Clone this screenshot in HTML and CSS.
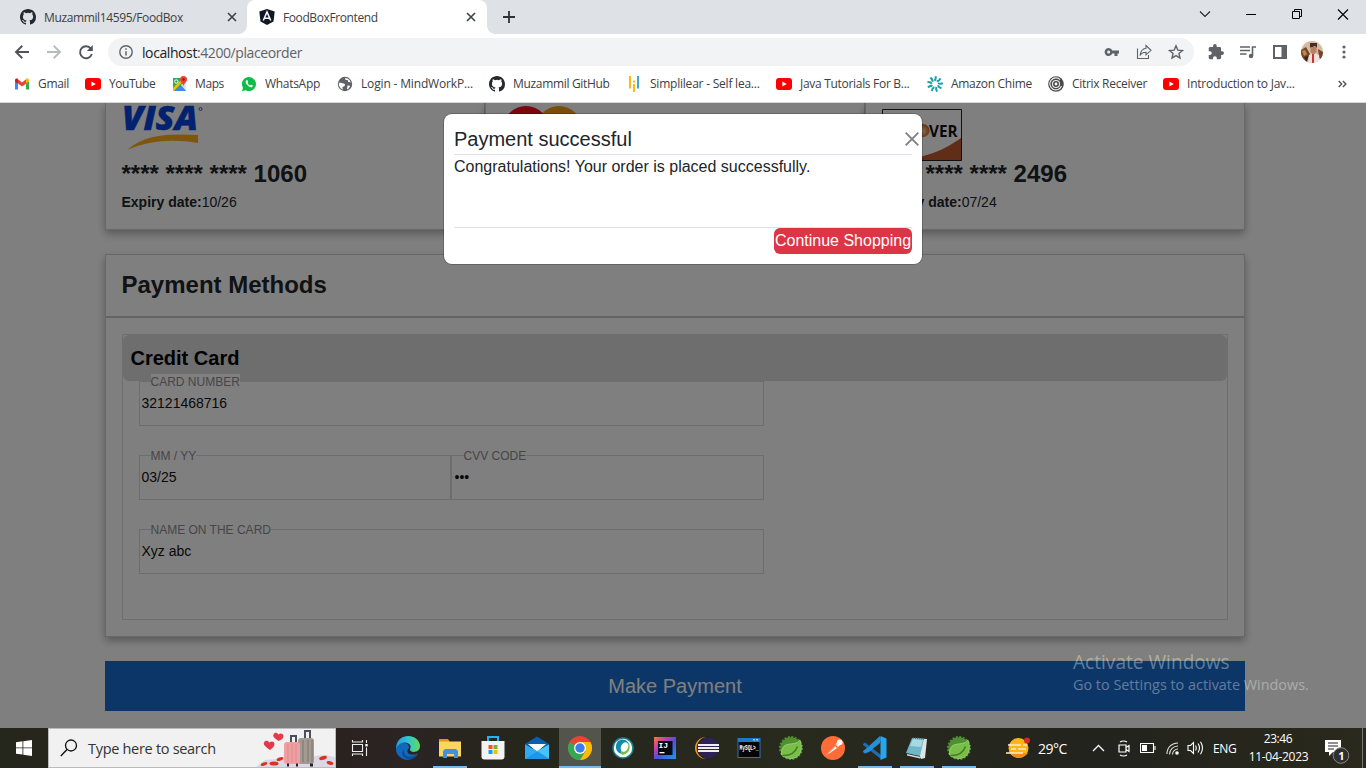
FILE: index.html
```html
<!DOCTYPE html>
<html lang="en">
<head>
<meta charset="utf-8">
<title>FoodBoxFrontend</title>
<link rel="stylesheet" href="styles.css">
</head>
<body>
<svg class="defs" aria-hidden="true">
  <symbol id="github" viewBox="0 0 16 16"><path fill="#24292f" d="M8 0C3.58 0 0 3.58 0 8c0 3.54 2.29 6.53 5.47 7.59.4.07.55-.17.55-.38 0-.19-.01-.82-.01-1.49-2.01.37-2.53-.49-2.69-.94-.09-.23-.48-.94-.82-1.13-.28-.15-.68-.52-.01-.53.63-.01 1.08.58 1.23.82.72 1.21 1.87.87 2.33.66.07-.52.28-.87.51-1.07-1.78-.2-3.64-.89-3.64-3.95 0-.87.31-1.59.82-2.15-.08-.2-.36-1.02.08-2.12 0 0 .67-.21 2.2.82a7.6 7.6 0 0 1 4 0c1.53-1.04 2.2-.82 2.2-.82.44 1.1.16 1.92.08 2.12.51.56.82 1.27.82 2.15 0 3.07-1.87 3.75-3.65 3.95.29.25.54.73.54 1.48 0 1.07-.01 1.93-.01 2.2 0 .21.15.46.55.38A8 8 0 0 0 16 8c0-4.42-3.58-8-8-8z"/></symbol>
  <symbol id="youtube" viewBox="0 0 16 16"><rect y="2" width="16" height="12" rx="3" fill="#f00"/><path fill="#fff" d="M6.400 5.500v5L10.800 8z"/></symbol>
  <symbol id="spring" viewBox="0 0 26 26"><circle cx="13" cy="13" r="10.700" fill="#4f9130"/><circle cx="13" cy="13" r="11" fill="none" stroke="#4f9130" stroke-width="2" stroke-dasharray="2 1.450"/><path fill="#78be47" stroke="#b9dca0" stroke-width=".6" d="M22 5c3 8 1 16-5.500 18C12 24.300 7 23 3.500 20 3 14 5 10.500 10 9.300 15 8.300 19 9 22 5z"/><path d="M4.500 20.500c6 .2 12.500-2 15-9" fill="none" stroke="#427f28" stroke-width="1.500"/></symbol>
  <symbol id="cross" viewBox="0 0 10 10"><path d="M1 1l8 8M9 1l-8 8" stroke="#3c4043" stroke-width="1.600"/></symbol>
</svg>

<header class="tabs">
  <div class="tab tab-idle"><svg width="16" height="16"><use href="#github"/></svg><span class="tab-title t-a">Muzammil14595/FoodBox</span><svg class="tab-x" width="10" height="10"><use href="#cross"/></svg></div>
  <div class="tab tab-active"><svg width="16" height="16" viewBox="0 0 16 16"><path fill="#111827" d="M8 0l7.700 2.600L14.500 12.500 8 16 1.500 12.500.3 2.600z"/><path d="M4.300 11.500L8 3l3.700 8.500M5.600 9.200h4.800" fill="none" stroke="#fff" stroke-width="1.500"/></svg><span class="tab-title t-b">FoodBoxFrontend</span><svg class="tab-x" width="10" height="10"><use href="#cross"/></svg></div>
  <svg class="new-tab" width="12" height="12" viewBox="0 0 12 12"><path d="M6 0v12M0 6h12" stroke="#303134" stroke-width="1.800"/></svg>
  <div class="win">
    <svg width="46" height="30" viewBox="0 0 46 30"><path d="M18 11.500l5 5 5-5" fill="none" stroke="#222" stroke-width="1.100"/></svg>
    <svg width="46" height="30" viewBox="0 0 46 30"><path d="M18 14.500h10" stroke="#000"/></svg>
    <svg width="46" height="30" viewBox="0 0 46 30"><path d="M18.500 11.500h7v7h-7zM20.500 11.500v-2h7v7h-2" fill="none" stroke="#000"/></svg>
    <svg width="46" height="30" viewBox="0 0 46 30"><path d="M18 9.500l10 10M28 9.500l-10 10" stroke="#000" stroke-width="1.100"/></svg>
  </div>
</header>

<div class="toolbar">
  <svg width="32" height="36" viewBox="0 0 32 36"><path d="M29 18H16.500M22.300 11.800L16 18l6.300 6.200" fill="none" stroke="#50545a" stroke-width="1.900"/></svg>
  <svg width="32" height="36" viewBox="0 0 32 36"><path d="M15 18h12.500M21.700 11.800L28 18l-6.300 6.200" fill="none" stroke="#b9bbbe" stroke-width="1.900"/></svg>
  <svg width="32" height="36" viewBox="0 0 32 36"><path d="M26.800 14.600A6 6 0 1 0 27.800 20" fill="none" stroke="#50545a" stroke-width="1.900"/><path d="M28.800 11v6h-6z" fill="#50545a"/></svg>
  <div class="omnibox">
    <svg width="14" height="14" viewBox="0 0 14 14"><circle cx="7" cy="7" r="6.200" fill="none" stroke="#5f6368" stroke-width="1.400"/><path d="M7 6.200v4.300M7 3.300v1.500" stroke="#5f6368" stroke-width="1.500"/></svg>
    <span class="url"><b>localhost</b>:4200/placeorder</span>
    <div class="omni-icons">
      <svg width="16" height="16" viewBox="0 0 16 16"><path fill="#5f6368" fill-rule="evenodd" d="M8.300 6.500A4 4 0 1 0 8.300 9.500H10.500V12h3V9.500H15v-3zM4.600 6.500a1.500 1.500 0 1 1 0 3 1.500 1.500 0 0 1 0-3z"/></svg>
      <svg width="16" height="16" viewBox="0 0 16 16"><path d="M1.500 4.500v10h11v-3.500M10 1.500l5 4.800-5 4.500V8.300C7 8.300 5.300 9 4 11.500 4.500 7 6.500 4.900 10 4.300z" fill="none" stroke="#5f6368" stroke-width="1.100"/></svg>
      <svg width="16" height="16" viewBox="0 0 16 16"><path d="M8 1.800l1.800 4.300 4.700.4-3.600 3 1.100 4.600L8 11.600 4 14.100l1.100-4.600-3.600-3 4.700-.4z" fill="none" stroke="#5f6368" stroke-width="1.400"/></svg>
    </div>
  </div>
  <div class="actions">
    <svg width="16" height="16" viewBox="1 1 22 22"><path fill="#5f6368" d="M20.500 11H19V7c0-1.100-.9-2-2-2h-4V3.500a2.500 2.500 0 0 0-5 0V5H4c-1.100 0-2 .9-2 2v3.800h1.500a2.700 2.700 0 0 1 0 5.400H2V20c0 1.100.9 2 2 2h3.800v-1.500a2.700 2.700 0 0 1 5.400 0V22H17c1.100 0 2-.9 2-2v-4h1.500a2.500 2.500 0 0 0 0-5z"/></svg>
    <svg width="16" height="16" viewBox="0 0 16 16"><path d="M0 3h10M0 6.500h10M0 10h6.500" stroke="#5f6368" stroke-width="1.500"/><path d="M12.500 12V3H16" fill="none" stroke="#5f6368" stroke-width="1.600"/><circle cx="11" cy="12" r="2.200" fill="#5f6368"/></svg>
    <svg width="14" height="14" viewBox="0 0 14 14"><path fill="#5f6368" fill-rule="evenodd" d="M0 0h14v14H0zM2 2v10h6.500V2z"/></svg>
    <svg width="22" height="22" viewBox="0 0 22 22"><clipPath id="face"><circle cx="11" cy="11" r="11"/></clipPath><g clip-path="url(#face)"><path fill="#d7b99f" d="M0 0h22v22H0z"/><path fill="#74482e" d="M0 9l5-3 4 7-4 9H0zM17 8l5 3v8l-4-2z"/><path fill="#c98a3c" d="M1 10l3-1 2 4-3 2z"/><path fill="#efe1df" d="M8 14l5-2 5 2 1 8H7z"/><path fill="#463025" d="M9 2h7v5l-2-2-5 2z"/><path fill="#b98163" d="M9.500 6h6v5l-3 3-3-3z"/><path fill="#c93333" d="M11 13h2v9h-2z"/><path fill="#332420" d="M3 16l4-1-1 6z"/></g></svg>
    <svg width="4" height="14" viewBox="0 0 4 14"><g fill="#5f6368"><circle cx="2" cy="2" r="1.600"/><circle cx="2" cy="7" r="1.600"/><circle cx="2" cy="12" r="1.600"/></g></svg>
  </div>
</div>

<nav class="bookmarks">
  <a><svg width="16" height="16" viewBox="0 0 16 16"><path fill="#4285f4" d="M1 4v9.500h3V7z"/><path fill="#34a853" d="M12 7v6.500h3V4z"/><path fill="#ea4335" d="M1 4.500L3 2.500l5 4 5-4V7L8 10.500 2 6z"/><path fill="#c5221f" d="M1 4.200C1 2.500 2.700 2 4 3v4.500L1 5.500z"/><path fill="#fbbc04" d="M15 4.200C15 2.500 13.300 2 12 3v4.500l3-2z"/></svg><span class="k1">Gmail</span></a>
  <a><svg width="16" height="16"><use href="#youtube"/></svg><span class="k2">YouTube</span></a>
  <a><svg width="16" height="16" viewBox="0 0 16 16"><path fill="#34a853" d="M1 2h13v13H1z"/><path fill="#fbbc04" d="M1 12L11 2l2 1L2 15H1z"/><path fill="#dfe3e8" d="M9 9l5-5v11z"/><path fill="#4285f4" d="M2.500 15L8 9.500l5.500 5.500z"/><circle cx="4.300" cy="5.500" r="1.700" fill="none" stroke="#fff"/><path fill="#ea4335" d="M11.500 0A3.500 3.500 0 0 1 15 3.500c0 2.500-3 3.500-3.500 7C11 7 8 6 8 3.500A3.500 3.500 0 0 1 11.500 0z"/><circle cx="11.500" cy="3.500" r="1.200" fill="#8d1b12"/></svg><span class="k3">Maps</span></a>
  <a><svg width="16" height="16" viewBox="0 0 16 16"><path fill="#0dbd47" d="M8 1a7 7 0 1 1-3.300 13.200L1 15.200l1-3.500A7 7 0 0 1 8 1z"/><path fill="#fff" d="M5.500 4.300c-1.300.8-1 2.500.3 4.200 1.700 2.200 4.300 3.600 5.600 2.300.7-.8.5-1.200-.1-1.500l-1.100-.6c-.5-.2-.7.8-1.200.7C8 9 7 8 6.700 7c-.1-.4.6-.6.5-1.100L6.500 4.400c-.2-.4-.6-.4-1-.1z"/></svg><span class="k4">WhatsApp</span></a>
  <a><svg width="16" height="16" viewBox="0 0 16 16"><circle cx="8" cy="8" r="7.200" fill="#5f6368"/><path d="M2 7c2-.5 3 .5 4.500.5s2 1.500 1 2.500-2 0-2 2l.5 1.500C3 12.500 1.500 9.500 2 7zM8 2.200c0 1.500 1 1.600 2.300 1.800s0 1.800 1.300 2 1.600 0 1.900 1.300c.3-3-2-5.500-5.500-5.100zM10.500 9.500c1.500.2 2.500 0 2.500.5-.5 2-1.500 3-3 3.500z" fill="#fff"/></svg><span class="k5">Login - MindWorkP...</span></a>
  <a><svg width="16" height="16"><use href="#github"/></svg><span class="k6">Muzammil GitHub</span></a>
  <a><svg width="16" height="16" viewBox="0 0 16 16"><path fill="#fdb913" d="M1 0h2v12.500H1zM5 8h2v8H5zM5 4.500h2v2H5z"/><path fill="#3ea6dd" d="M9 0h2v12.500H9z"/></svg><span class="k7">Simplilear - Self lea...</span></a>
  <a><svg width="16" height="16"><use href="#youtube"/></svg><span class="k8">Java Tutorials For B...</span></a>
  <a><svg width="16" height="16" viewBox="0 0 16 16"><g fill="none" stroke="#17a2a8" stroke-width="2"><path id="ray" d="M7.500 4.800Q9.300 3 8.500.2"/><use href="#ray" transform="rotate(40 8 8)"/><use href="#ray" transform="rotate(80 8 8)"/><use href="#ray" transform="rotate(120 8 8)"/><use href="#ray" transform="rotate(160 8 8)"/><use href="#ray" transform="rotate(200 8 8)"/><use href="#ray" transform="rotate(240 8 8)"/><use href="#ray" transform="rotate(280 8 8)"/><use href="#ray" transform="rotate(320 8 8)"/></g></svg><span class="k9">Amazon Chime</span></a>
  <a><svg width="16" height="16" viewBox="0 0 16 16"><circle cx="8" cy="8" r="7.800" fill="#4a4a4a"/><g fill="none" stroke="#eee" stroke-width="1.100"><path d="M13.500 10A6 6 0 1 1 12 3.500"/><circle cx="8" cy="8" r="3.500"/></g><circle cx="8" cy="8" r="1.400" fill="#fff"/></svg><span class="k10">Citrix Receiver</span></a>
  <a><svg width="16" height="16"><use href="#youtube"/></svg><span class="k11">Introduction to Jav...</span></a>
  <a><svg width="9" height="8" viewBox="0 0 9 8"><path d="M.7 1l3 3-3 3M4.900 1l3 3-3 3" fill="none" stroke="#50545a" stroke-width="1.400"/></svg></a>
</nav>

<main class="viewport">
  <div class="page">
    <section class="saved">
      <article class="card">
        <svg class="brand" width="82" height="50" viewBox="0 0 82 50"><text x="0" y="25" class="visa" textLength="76" lengthAdjust="spacingAndGlyphs">VISA</text><circle cx="78.500" cy="4" r="1.500" fill="none" stroke="#0442de" stroke-width=".8"/><path fill="#ffae18" d="M5 45C25 28 50 29 76 30v8C51 34 28 35 5 45z"/></svg>
        <h2>**** **** **** 1060</h2>
        <p><b>Expiry date:</b>10/26</p>
      </article>
      <article class="card">
        <svg class="brand" width="82" height="50" viewBox="0 0 82 50"><circle cx="57" cy="24" r="23" fill="#f59a14"/><circle cx="24" cy="24" r="23" fill="#f80c1a"/></svg>
      </article>
      <article class="card">
        <svg class="brand discover" width="80" height="52" viewBox="0 0 80 52"><defs><radialGradient id="globe" cx=".5" cy=".55"><stop offset="0" stop-color="#ffd8a8"/><stop offset="1" stop-color="#d96522"/></radialGradient></defs><path d="M.5.500h79v51H.5z" fill="#fff" stroke="#222"/><path fill="#c05a32" d="M15 51C45 49 62 41 79 29v22z"/><circle cx="41" cy="21.500" r="6.500" fill="url(#globe)"/><text x="47" y="27.500" class="disc" textLength="28.500" lengthAdjust="spacingAndGlyphs">VER</text></svg>
        <h2>**** **** **** 2496</h2>
        <p><b>Expiry date:</b>07/24</p>
      </article>
    </section>

    <section class="methods">
      <h2 class="methods-head">Payment Methods</h2>
      <div class="methods-body">
        <div class="credit">
          <h3>Credit Card</h3>
          <div class="form">
            <div class="field"><label>CARD NUMBER</label><span>32121468716</span></div>
            <div class="pair">
              <div class="field"><label>MM / YY</label><span>03/25</span></div>
              <div class="field cvv"><label>CVV CODE</label><span>•••</span></div>
            </div>
            <div class="field"><label>NAME ON THE CARD</label><span>Xyz abc</span></div>
          </div>
        </div>
      </div>
    </section>
    <button class="pay">Make Payment</button>
  </div>

  <div class="backdrop"></div>
  <div class="modal">
    <div class="modal-head">Payment successful<svg class="close" width="14" height="14" viewBox="0 0 14 14"><path d="M.7.700l12.600 12.600M13.300.700L.7 13.300" stroke="#808080" stroke-width="1.900"/></svg></div>
    <div class="modal-body">Congratulations! Your order is placed successfully.</div>
    <div class="modal-foot"><button>Continue Shopping</button></div>
  </div>
  <div class="watermark"><div class="w1">Activate Windows</div><div class="w2">Go to Settings to activate Windows.</div></div>
</main>

<footer class="taskbar">
  <div class="start"><svg width="16" height="16" viewBox="0 0 16 16"><path fill="#fff" d="M0 2.200l6.500-.9v6.200H0zM7.300 1.200L16 0v7.500H7.300zM0 8.300h6.500v6.300L0 13.700zM7.300 8.300H16V16l-8.700-1.200z"/></svg></div>
  <div class="search">
    <svg width="18" height="18" viewBox="0 0 18 18"><circle cx="11" cy="6.500" r="5.500" fill="none" stroke="#111" stroke-width="1.300"/><path d="M7 10.500L.8 17" stroke="#111" stroke-width="1.400"/></svg>
    <span>Type here to search</span>
    <svg class="luggage" width="79" height="38" viewBox="0 0 79 38"><path fill="#dcd7e4" d="M0 38l9-7 60-5 10 2v10z"/><g fill="#e5394b"><path d="M14 21c-4-3-7-5-6-7.500s4-2 5.500 0c2-2 5-1 5 1.500s-2 4-4.500 6z"/><path d="M22.500 12c-4-3-6-4-5-6.500s3.500-2 5 0c2-2 5-1 5 1.500s-2 3.500-5 5z"/></g><path d="M35 14V7h5v7M49 11V2h5v9" fill="none" stroke="#4b4d59" stroke-width="2"/><rect x="42" y="9" width="16" height="26" rx="3" fill="#a39a91"/><path d="M47 11v22M52 11v22M56 11v22" stroke="#7d756d"/><rect x="28" y="13" width="16" height="22" rx="3" fill="#ed9fa1"/><path d="M32 15v18M36 15v18M40 15v18" stroke="#dc8b8e"/><g fill="#d9321f"><ellipse cx="24" cy="30" rx="3.500" ry="1.700" transform="rotate(-20 24 30)"/><ellipse cx="18" cy="34.500" rx="4.500" ry="2"/><ellipse cx="8" cy="35" rx="3.500" ry="1.500" transform="rotate(-20 8 35)"/><ellipse cx="67" cy="29" rx="4" ry="1.800" transform="rotate(-15 67 29)"/><ellipse cx="74" cy="34" rx="3.500" ry="1.800" transform="rotate(15 74 34)"/></g><path d="M31 36h2M40 36h2M54 36h3" stroke="#222" stroke-width="3"/></svg>
  </div>
  <div class="taskview"><svg width="18" height="18" viewBox="0 0 18 18"><path d="M1.500 5.500h10v7h-10zM1.500 1v2h10V1M1.500 17v-2h10v2M15.500 1v3M15.500 8.500V17" fill="none" stroke="#eee" stroke-width="1.100"/><path fill="#fff" d="M14.300 5h2.400v2.400h-2.400z"/></svg></div>
  <div class="apps">
    <i><svg width="26" height="26" viewBox="0 0 26 26"><defs><linearGradient id="edge"><stop stop-color="#259be4"/><stop offset=".5" stop-color="#30c6d2"/><stop offset="1" stop-color="#67da54"/></linearGradient></defs><path fill="#1168bd" d="M1 14c0-8 14-8 13-1-4 4 0 9 9 5.500C19 25 10 27 5 22 2 20 1 17 1 14z"/><path fill="url(#edge)" d="M1 14C1 4 8 1 13 1c8 0 12 6 12 10 0 7-9 7-10 4-.5-1 1-1.500.5-4C14 6 4 6 1 14z"/><path fill="#0c4f98" d="M9 14c-1 6 4 11 14 4.500C20 24 14 25.500 10 23c-3-2-4-6-1-9z"/></svg></i>
    <i class="open"><svg width="24" height="24" viewBox="0 0 24 24"><path fill="#d99a14" d="M1 3h9l2 3v3H1z"/><path fill="#ffd562" d="M1 5.500h22v15H1z"/><path fill="#3d94dc" d="M5 22v-7l2-2h11l2 2v7h-4v-4H9v4z"/></svg></i>
    <i><svg width="26" height="26" viewBox="0 0 26 26"><path d="M8 8V2h10v6" fill="none" stroke="#22b4f2" stroke-width="2"/><path fill="#f3f3f3" d="M1.500 6h23v15.500q0 3-3 3h-17q-3 0-3-3z"/><path fill="#f35325" d="M8.500 10h4v4h-4z"/><path fill="#7db904" d="M13.500 10h4v4h-4z"/><path fill="#0a9ff0" d="M8.500 15h4v4h-4z"/><path fill="#ffba08" d="M13.500 15h4v4h-4z"/></svg></i>
    <i><svg width="26" height="26" viewBox="0 0 26 26"><path fill="#0a5db0" d="M1 9l12-7.500L25 9v3H1z"/><path fill="#f4f8fb" d="M4 9h18l-9 8z"/><path fill="#32aaf0" d="M1 9.500l13 7L25 24H1z"/><path fill="#49c3f7" d="M25 9.500V24L13 16z"/><path fill="#2196e8" d="M1 24l12-7.500L25 24z"/></svg></i>
    <i class="current"><svg width="26" height="26" viewBox="0 0 26 26"><circle cx="13" cy="13" r="12" fill="#ea4335"/><path fill="#34a853" d="M2.600 7A12 12 0 0 0 13 25l5.500-9L13 13z"/><path fill="#fbbc04" d="M23.400 7A12 12 0 0 1 13 25l5.500-9L13 7z"/><circle cx="13" cy="13" r="6" fill="#fff"/><circle cx="13" cy="13" r="4.700" fill="#3b7ded"/></svg></i>
    <i><svg width="24" height="24" viewBox="0 0 24 24"><circle cx="12" cy="12" r="10" fill="#f4f7f5" stroke="#1b7c91" stroke-width="1.500"/><path fill="#138bab" d="M7 5c5-4 12 0 11 6-4-6-10-1-7 7-6-1-8-8-4-13z"/><path fill="#77bd43" d="M18 7c2 7-1 11-7 12-2-5 1-10 7-12z"/><ellipse cx="13.500" cy="11" rx="3.500" ry="5" fill="#fff" transform="rotate(25 13.500 11)"/></svg></i>
    <i><svg width="22" height="22" viewBox="0 0 22 22"><defs><linearGradient id="ij" x2="1" y2="1"><stop stop-color="#f97c31"/><stop offset=".3" stop-color="#c93bb0"/><stop offset=".55" stop-color="#4a52e2"/><stop offset="1" stop-color="#169bf4"/></linearGradient></defs><path fill="url(#ij)" d="M0 0h22v22H0z"/><path fill="#080812" d="M4 4h14.500v14H4z"/><text x="4.500" y="11" class="ij">IJ</text><path fill="#fff" d="M5.500 15h5v1.300h-5z"/></svg></i>
    <i><svg width="26" height="24" viewBox="0 0 26 24"><circle cx="12" cy="12" r="11" fill="#f7941e"/><circle cx="14" cy="12" r="11.300" fill="#25261c"/><circle cx="14.500" cy="12" r="10.500" fill="#2c2255"/><path stroke="#eee" stroke-width="1.800" d="M4 9h21M4 12h21M4 15h21"/></svg></i>
    <i><svg class="console" width="24" height="20" viewBox="0 0 24 20"><path fill="#1d7ac8" d="M.5 0h23v20H.5z"/><path fill="#050505" d="M1.500 4h21v15h-21z"/><path fill="#9fd2ff" d="M16 1h2v1.500h-2zM19 1h2v1.500h-2z"/><text x="2.500" y="11.500" class="mysql" textLength="19" lengthAdjust="spacingAndGlyphs">MySQL&gt;_</text></svg></i>
    <i><svg width="26" height="26"><use href="#spring"/></svg></i>
    <i><svg width="26" height="26" viewBox="0 0 26 26"><circle cx="13" cy="13" r="12" fill="#ff6c37"/><path fill="#fff" d="M6 20l9-9 2 2-7 5zM15.500 9.500l1.500-2a2.800 2.800 0 1 1 3 2.500l-2 2z"/><path d="M7 19.500l11-11" stroke="#ff6c37" stroke-width=".8"/></svg></i>
    <i class="open"><svg width="26" height="26" viewBox="0 0 26 26"><path fill="#1a6fb4" d="M1 9l2-1.500L19 20v4L1 10zM1 17l2 1.500L19 6V2L1 16z"/><path fill="#25a7ee" d="M18.500 1l6 2.500v19L18.500 25z"/><path fill="#258fd8" d="M18 1v7L7 17l-4 1.500-2-2z"/></svg></i>
    <i class="open"><svg width="24" height="24" viewBox="0 0 24 24"><path fill="#dfe5e6" d="M8 2l14 1-2 19-4 1z"/><path fill="#6fb7c9" d="M7 2l12 1-4 17-14-3z"/><path fill="#a6dae2" d="M8 3l10 1-2 7-11-1z"/><path fill="#d8dcdc" d="M2 18l14 3-1 1.500-13-3z"/><path d="M8 2l12 1" stroke="#666" stroke-width="1.500" stroke-dasharray="1 1"/></svg></i>
    <i class="open"><svg width="26" height="26"><use href="#spring"/></svg></i>
  </div>
  <div class="tray">
    <svg width="25" height="22" viewBox="0 0 25 22"><circle cx="12.500" cy="11" r="10" fill="#ffb515"/><path fill="#f58a18" d="M4 16h18q-4 5-9 5t-9-5z"/><path d="M2 8h13M17 8h4M5 12h5M12 12h8M0 16h17" stroke="#ffedc5" stroke-width="1.600"/><circle cx="21" cy="3.500" r="3" fill="#d72b22"/></svg>
    <span class="temp">29°C</span>
    <svg width="13" height="8" viewBox="0 0 13 8"><path d="M1 7l5.500-5.500L12 7" fill="none" stroke="#fff" stroke-width="1.300"/></svg>
    <svg width="12" height="17" viewBox="0 0 12 17"><path d="M1 5h7v7H1zM8 7.500l3-2v6l-3-2M2 2q3.500-2 7 0M2 15q3.500 2 7 0" fill="none" stroke="#fff" stroke-width="1.200"/></svg>
    <svg width="16" height="10" viewBox="0 0 16 10"><path d="M.5.500h13v9H.5zM15 3v4" fill="none" stroke="#fff" stroke-width="1.100"/><path fill="#fff" d="M2 2h5v6H2z"/></svg>
    <svg width="13" height="13" viewBox="0 0 13 13"><path d="M1 12C1 5 6 1 12 1M3.500 12.500c0-5 4-8.500 8.500-8.500M6.500 12.500c0-3 2.500-5.500 5.500-5.500" fill="none" stroke="#ddd" stroke-width="1.100"/><circle cx="11" cy="11" r="1.800" fill="#fff"/></svg>
    <svg width="17" height="14" viewBox="0 0 17 14"><path d="M1 4.500h2.500l3-3v11l-3-3H1zM8.500 4.500q1.500 2.500 0 5M11 2.500q3 4.500 0 9M13.500.700q4 6.300 0 12.600" fill="none" stroke="#fff" stroke-width="1.100"/></svg>
    <span class="lang">ENG</span>
    <div class="clock"><span class="time">23:46</span><span class="date">11-04-2023</span></div>
    <svg width="26" height="26" viewBox="0 0 26 26"><path fill="#fff" d="M1 2h16v12H9l-4 4v-4H1z"/><path d="M4 5h10M4 8h10M4 11h6" stroke="#222"/><circle cx="17" cy="17.500" r="7.800" fill="#303030" stroke="#888"/><text x="14.300" y="21.500" class="badge">1</text></svg>
    <b class="edge"></b>
  </div>
</footer>
</body>
</html>
```

FILE: styles.css
```css
* { box-sizing: border-box; }
body { margin: 0; width: 1366px; height: 768px; overflow: hidden; display: flex; flex-direction: column; font-family: "Open Sans", "Noto Sans", sans-serif; font-size: 12px; color: #3c4043; background: #fff; }
svg { display: block; flex: none; }
.defs { position: absolute; width: 0; height: 0; }
h2, h3, p { margin: 0; }
span { white-space: nowrap; }

.tabs { height: 34px; flex: none; display: flex; background: #dee1e6; }
.tab { height: 34px; display: flex; align-items: center; }
.tab-idle { width: 247px; padding-left: 20px; }
.tab-active { position: relative; width: 240px; padding-left: 12px; background: #fff; border-radius: 8px 8px 0 0; }
.tab-active::before, .tab-active::after { content: ""; position: absolute; bottom: 0; width: 8px; height: 8px; }
.tab-active::before { left: -8px; background: radial-gradient(circle at 0 0, transparent 7.5px, #fff 8px); }
.tab-active::after { right: -8px; background: radial-gradient(circle at 100% 0, transparent 7.5px, #fff 8px); }
.tab-title { flex: 1; margin-left: 8px; }
.t-a { letter-spacing: -.37px; }
.t-b { letter-spacing: -.4px; }
.tab-idle .tab-x { margin-right: 10px; }
.tab-active .tab-x { margin-right: 11px; }
.new-tab { margin: 11px 0 0 16px; }
.win { display: flex; margin-left: auto; }

.toolbar { height: 36px; flex: none; display: flex; align-items: center; }
.omnibox { width: 1086px; height: 28px; margin-left: 12px; padding: 0 10px 0 11px; display: flex; align-items: center; gap: 9px; border-radius: 14px; background: #f1f3f4; }
.url { flex: 1; font-size: 14px; letter-spacing: -.41px; color: #5f6368; }
.url b { font-weight: 400; color: #202124; }
.omni-icons { display: flex; gap: 16px; }
.actions { flex: 1; padding-left: 14px; display: grid; grid-template-columns: 32px 33px 28px 41px 4px; align-items: center; }

.bookmarks { height: 33px; flex: none; padding: 0 0 5px 14px; display: grid; grid-template-columns: 71px 87px 69px 96px 152px 139px 148px 151px 121px 115px 175px 14px; align-items: center; border-bottom: 1px solid #d5d6d8; }
.bookmarks a { display: flex; align-items: center; gap: 8px; }
.k1, .k10 { letter-spacing: -.3px; }
.k2 { letter-spacing: -.45px; }
.k3 { letter-spacing: -.4px; margin-left: -1px; }
.k4, .k9 { letter-spacing: -.3px; }
.k5 { letter-spacing: -.16px; }
.k6 { letter-spacing: -.32px; }
.k7 { letter-spacing: -.22px; margin-left: -2px; }
.k8 { letter-spacing: -.3px; }
.k11 { letter-spacing: -.22px; }

.viewport { position: relative; height: 625px; flex: none; overflow: hidden; font-family: "Liberation Sans", Arial, sans-serif; color: #212529; background: #fff; }
.page { width: 1140px; margin-left: 105px; display: flex; flex-direction: column; }
.saved { height: 127px; margin-bottom: 24px; display: grid; grid-template-columns: 380px 380px 380px; }
.card { padding: 2px 16px 0; border: 1px solid #d0d0d0; border-top: 0; box-shadow: 0 4px 8px rgba(0,0,0,.3); background: #fff; font-size: 14px; }
.brand { height: 50px; overflow: visible; }
.discover { height: 52px; margin: 4px 0 -6px; }
.card h2 { margin: 5px 0 0 -.5px; font-size: 24px; line-height: 28px; }
.card p { margin: 6px 0 0 -.5px; line-height: 17px; }
.visa { font: italic 800 34px "Open Sans", sans-serif; fill: #0442de; stroke: #0442de; stroke-width: .5; }
.disc { font: 700 16px "Open Sans", sans-serif; fill: #111; }

.methods { height: 383px; border: 1px solid #d0d0d0; box-shadow: 0 4px 8px rgba(0,0,0,.3); background: #fff; }
.methods-head { height: 63px; padding: 15px 15.500px 0; border-bottom: 2px solid #c8c8c8; font-size: 24px; line-height: 30px; }
.methods-body { padding: 16px; }
.credit { height: 286px; border: 1px solid #ddd; }
.credit h3 { height: 46px; padding: 12px 7.500px; border-radius: 6px; background: #dcdcdc; font-size: 20px; line-height: 23px; color: #000; }
.form { width: 641px; padding-left: 16px; display: flex; flex-direction: column; gap: 29px; }
.field { height: 45px; flex: 1 0 auto; border: 1px solid #dbdbdb; padding: 0 1.500px; font-size: 14px; color: #111; display: flex; flex-direction: column; align-items: flex-start; }
.field label { margin: -8px 0 0 9px; height: 15px; line-height: 16px; font-size: 12px; color: #8c8c90; background: #fff; }
.field span { margin-top: 6px; line-height: 17px; }
.pair { display: flex; }
.pair .field { width: 312px; flex: none; }
.pair .cvv { width: 313px; padding-left: 2.500px; }
.pay { height: 50px; margin-top: 24px; padding: 0; border: 0; background: #1a6cd0; color: #fff; font: 20px "Liberation Sans", Arial, sans-serif; }

.backdrop { position: absolute; inset: 0; background: rgba(0,0,0,.5); }
.modal { position: absolute; left: 444px; top: 11px; width: 478px; height: 150px; padding: 10px; border-radius: 8px; background: #fff; box-shadow: 0 0 0 1px rgba(0,0,0,.2); }
.modal-head { position: relative; height: 31px; border-bottom: 1px solid #dee2e6; font-size: 20px; line-height: 30px; }
.close { position: absolute; right: -7px; top: 8px; }
.modal-body { height: 72px; font-size: 16px; line-height: 24px; }
.modal-foot { border-top: 1px solid #dee2e6; display: flex; justify-content: flex-end; }
.modal-foot button { width: 138px; height: 26px; padding: 0; border: 0; border-radius: 6px; background: #dc3545; color: #fff; font: 16px "Liberation Sans", Arial, sans-serif; white-space: nowrap; }
.watermark { position: absolute; left: 1073px; top: 546px; font-family: "Open Sans", sans-serif; color: rgba(255,255,255,.36); white-space: nowrap; }
.w1 { font-size: 19.100px; line-height: 26px; }
.w2 { font-size: 14.400px; line-height: 20px; }

.taskbar { height: 40px; flex: none; display: flex; background: linear-gradient(90deg, #25261c 0, #29221f 340px, #2b2423 400px, #25261c 520px, #292a1e 800px, #22231d 1100px, #29291c); color: #fff; }
.start { width: 48px; display: grid; place-items: center; }
.search { width: 288px; padding-left: 11px; display: flex; align-items: center; gap: 10px; background: #f1f1f1; border: 1px solid #bbb; color: #333; font-size: 14.500px; letter-spacing: -.3px; }
.search span { flex: 1; }
.taskview { width: 51px; padding-left: 15px; display: flex; align-items: center; }
.apps { display: grid; grid-template-columns: 42px 42px 44px 44px 42px 43px 42px 42px 42px 42px 42px 42px 42px 42px; }
.apps i { height: 40px; display: grid; place-items: center; }
.open { background: linear-gradient(#76b9ed, #76b9ed) center bottom / 34px 2px no-repeat; }
.current { background: #53544b; border-bottom: 2px solid #76b9ed; }
.current svg { margin-top: 2px; }
.console { overflow: visible; }
.ij { font: 700 8px "Liberation Mono", monospace; fill: #fff; }
.mysql { font: 700 6.500px "Liberation Mono", monospace; fill: #fff; }
.tray { flex: 1; padding-left: 26px; display: grid; grid-template-columns: 32px 50px 24px 23px 25px 23px 26px 34px 73px 38px 1fr; align-items: center; }
.temp { font-size: 14px; letter-spacing: -.5px; }
.tray > svg:nth-of-type(2) { margin-left: 4px; }
.tray > svg:nth-of-type(3) { margin-left: 6px; }
.tray > svg:nth-of-type(4) { margin-left: 5px; }
.tray > svg:nth-of-type(5) { margin-left: 6px; }
.tray > svg:nth-of-type(6) { margin-left: 4px; }
.tray > svg:nth-of-type(7) { margin: 5px 0 0 8px; }
.lang { margin-left: 4px; letter-spacing: -.3px; }
.clock { display: flex; flex-direction: column; align-items: center; line-height: 18px; letter-spacing: -.4px; }
.time { margin-left: -3px; }
.date { margin-left: -2px; letter-spacing: -.3px; }
.badge { font: 700 11px "Open Sans", sans-serif; fill: #fff; }
.edge { height: 40px; border-left: 1px solid #777; margin-left: 8px; }
```
